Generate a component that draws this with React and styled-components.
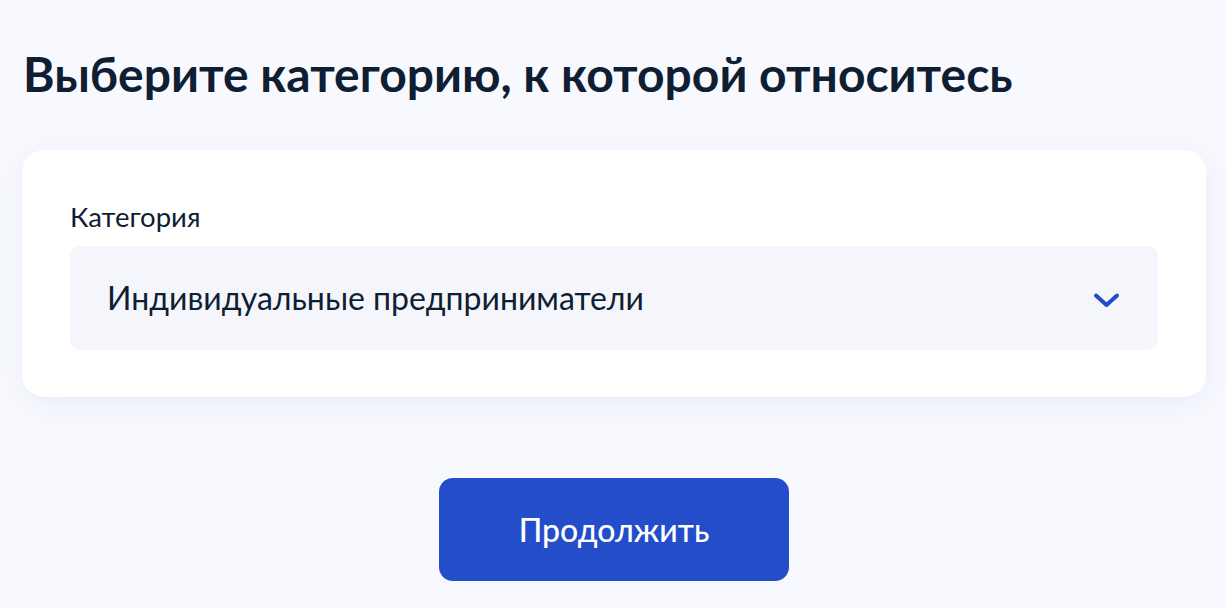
import React from "react";
import styled, { createGlobalStyle } from "styled-components";

const Global = createGlobalStyle`
  html, body { margin: 0; padding: 0; background: #f8f9fe; }
  body { font-family: Lato, "Noto Sans", sans-serif; -webkit-font-smoothing: antialiased; }
  * { box-sizing: border-box; }
`;

const Page = styled.main`
  width: 1226px;
  height: 608px;
  padding: 46px 20px 0 22px;
  background: #f8f9fe;
  display: flex;
  flex-direction: column;
`;

const Title = styled.h1`
  margin: 0 0 0 1px;
  font-family: Lato, "Noto Sans", sans-serif;
  font-weight: 700;
  font-size: 48px;
  line-height: 56px;
  color: #0f1e33;
  white-space: nowrap;
`;

const Card = styled.section`
  margin-top: 48px;
  height: 247px;
  background: #ffffff;
  border-radius: 22px;
  box-shadow: 0 6px 28px rgba(40, 70, 160, 0.07);
  padding: 53px 48px 0 48px;
  display: flex;
  flex-direction: column;
`;

const Label = styled.label`
  font-size: 27.5px;
  line-height: 28px;
  color: #0f1e33;
  margin-bottom: 15px;
`;

const Select = styled.div`
  height: 104px;
  background: #f4f6fb;
  border-radius: 10px;
  padding: 0 38px 0 37px;
  display: flex;
  align-items: center;
  justify-content: space-between;
  cursor: pointer;
`;

const Value = styled.span`
  font-size: 32px;
  line-height: 32px;
  color: #0f1e33;
`;

const Chevron = styled.svg`
  width: 27px;
  height: 17px;
  margin-top: 4px;
`;

const Actions = styled.div`
  display: flex;
  justify-content: center;
  margin-top: 81px;
`;

const Button = styled.button`
  width: 350px;
  height: 103px;
  border: none;
  border-radius: 14px;
  background: #234dc9;
  color: #ffffff;
  font-family: Lato, "Noto Sans", sans-serif;
  font-size: 32px;
  font-weight: 500;
  cursor: pointer;
`;

export default function App() {
  return (
    <>
      <Global />
      <Page>
        <Title>Выберите категорию, к которой относитесь</Title>
        <Card>
          <Label>Категория</Label>
          <Select>
            <Value>Индивидуальные предприниматели</Value>
            <Chevron viewBox="0 0 27 17" fill="none">
              <path d="M3 3.5 L13.5 13 L24 3.5" stroke="#2449cc" strokeWidth="4" strokeLinecap="round" strokeLinejoin="round" />
            </Chevron>
          </Select>
        </Card>
        <Actions>
          <Button>Продолжить</Button>
        </Actions>
      </Page>
    </>
  );
}
